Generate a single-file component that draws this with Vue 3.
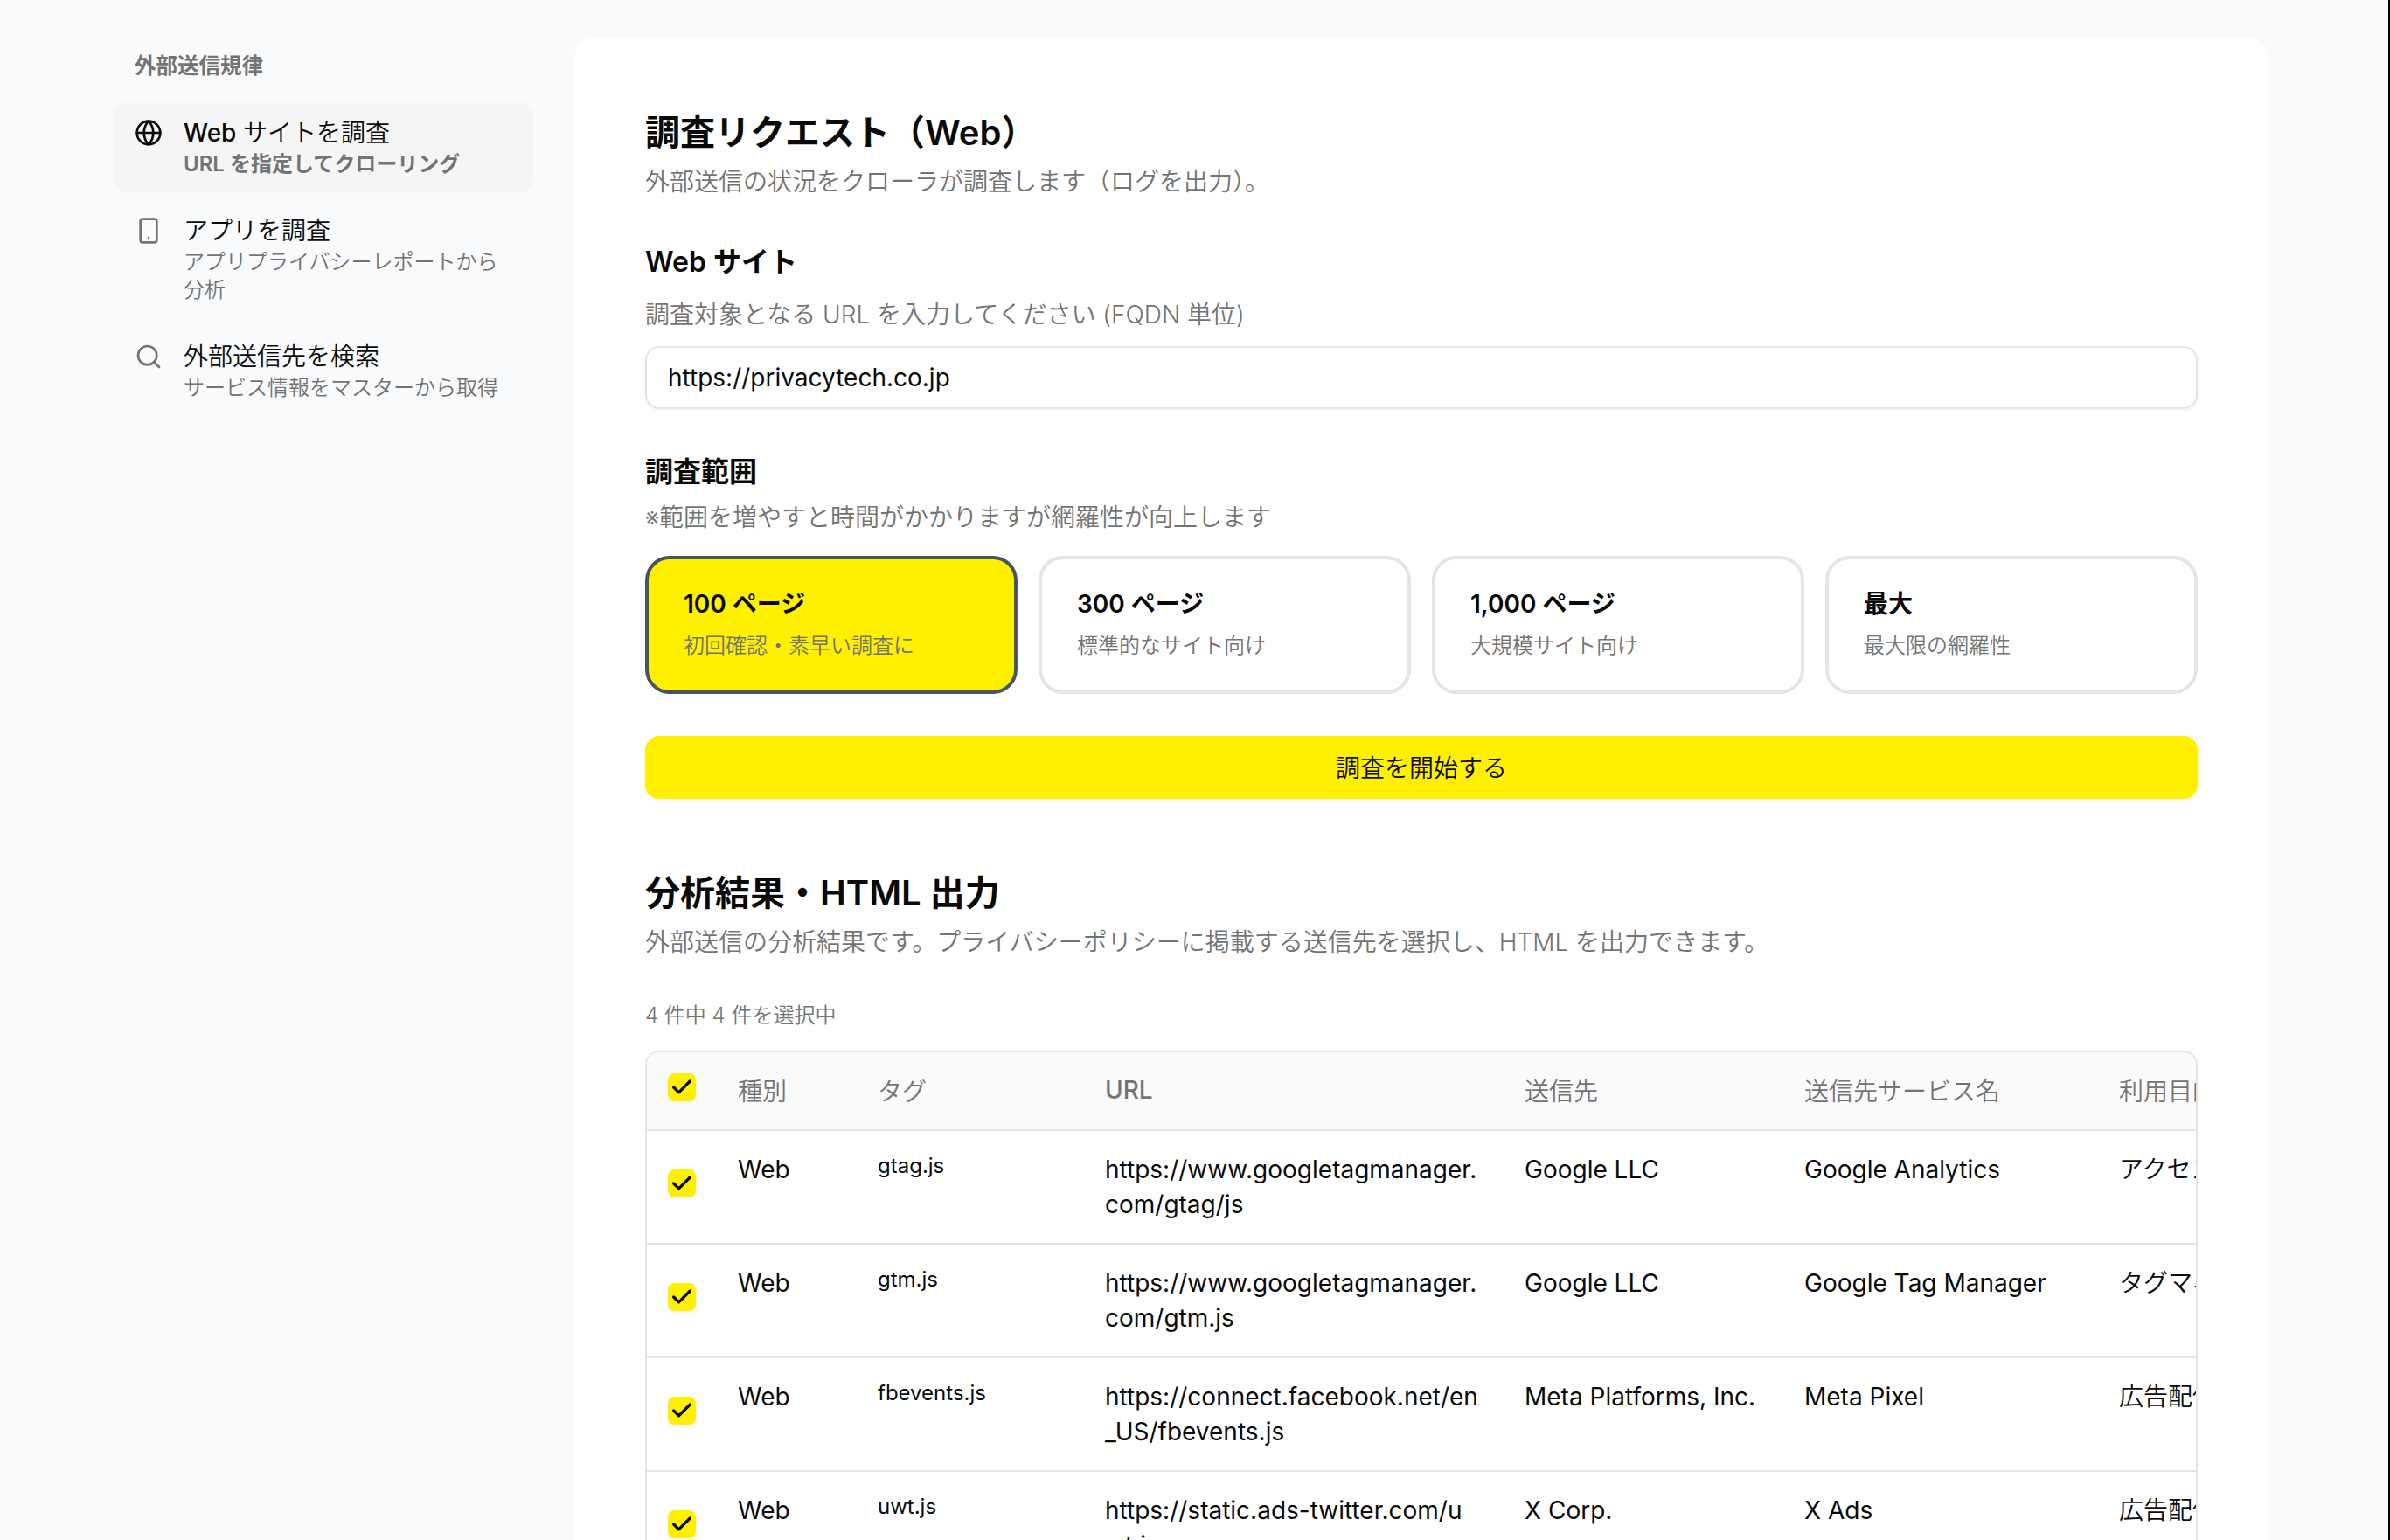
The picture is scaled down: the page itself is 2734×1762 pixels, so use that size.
<template>
  <div class="page">
    <div class="layout">
      <aside class="sidebar">
        <h2 class="side-title">外部送信規律</h2>
        <nav>
          <a v-for="item in menu" :key="item.icon" class="nav-item" :class="{ active: item.active }">
            <svg class="nav-icon" viewBox="0 0 24 24">
              <template v-if="item.icon === 'globe'">
                <circle cx="12" cy="12" r="10" />
                <path d="M12 2a14.5 14.5 0 0 0 0 20 14.5 14.5 0 0 0 0-20" />
                <path d="M2 12h20" />
              </template>
              <template v-else-if="item.icon === 'phone'">
                <rect width="14" height="20" x="5" y="2" rx="2" ry="2" />
                <path d="M12 18h.01" />
              </template>
              <template v-else>
                <circle cx="11" cy="11" r="8" />
                <path d="m21 21-4.3-4.3" />
              </template>
            </svg>
            <span class="nav-text">
              <span class="nav-label"><span v-if="item.prefix" class="latin">{{ item.prefix }}&nbsp;</span>{{ item.label }}</span>
              <span class="nav-desc">{{ item.desc }}</span>
            </span>
          </a>
        </nav>
      </aside>

      <main class="card">
        <h1>調査リクエスト（Web）</h1>
        <p class="lead">外部送信の状況をクローラが調査します（ログを出力）。</p>

        <form @submit.prevent>
          <label class="field-title" for="url">Web サイト</label>
          <p class="hint">調査対象となる URL を入力してください (FQDN 単位)</p>
          <input id="url" v-model="url" class="url-input" type="text" />

          <h3 class="field-title range-title">調査範囲</h3>
          <p class="hint range-hint">※範囲を増やすと時間がかかりますが網羅性が向上します</p>
          <div class="ranges">
            <div
              v-for="range in ranges"
              :key="range.id"
              class="range"
              :class="{ selected: range.id === selectedRange }"
              @click="selectedRange = range.id"
            >
              <div class="range-name">{{ range.name }}</div>
              <div class="range-desc">{{ range.desc }}</div>
            </div>
          </div>
          <button type="submit" class="submit">調査を開始する</button>
        </form>

        <h1 class="result-title">分析結果・HTML 出力</h1>
        <p class="lead">外部送信の分析結果です。プライバシーポリシーに掲載する送信先を選択し、HTML を出力できます。</p>
        <p class="count">{{ rows.length }} 件中 {{ selectedCount }} 件を選択中</p>

        <div class="table-wrap">
          <table>
            <colgroup>
              <col v-for="c in columns" :key="c.key" :class="'col-' + c.key" />
            </colgroup>
            <thead>
              <tr>
                <th v-for="c in columns" :key="c.key" :class="'head-' + c.key">
                  <span v-if="c.key === 'check'" class="checkbox" @click="toggleAll">
                    <svg v-if="selectedCount === rows.length" viewBox="0 0 24 24"><path d="M20 6 9 17l-5-5" /></svg>
                  </span>
                  <template v-else>{{ c.label }}</template>
                </th>
              </tr>
            </thead>
            <tbody>
              <tr v-for="row in rows" :key="row.tag">
                <td class="cell-check">
                  <span class="checkbox" :class="{ off: !row.checked }" @click="row.checked = !row.checked">
                    <svg v-if="row.checked" viewBox="0 0 24 24"><path d="M20 6 9 17l-5-5" /></svg>
                  </span>
                </td>
                <td>{{ row.type }}</td>
                <td class="cell-tag">{{ row.tag }}</td>
                <td class="cell-url">{{ row.url }}</td>
                <td>{{ row.company }}</td>
                <td>{{ row.service }}</td>
                <td class="cell-purpose">{{ row.purpose }}</td>
              </tr>
            </tbody>
          </table>
        </div>
      </main>
    </div>
  </div>
</template>

<script setup>
import { computed, reactive, ref } from 'vue';

const url = ref('https://privacytech.co.jp');
const selectedRange = ref('100');

const menu = [
  { icon: 'globe', prefix: 'Web', label: 'サイトを調査', desc: 'URL を指定してクローリング', active: true },
  { icon: 'phone', label: 'アプリを調査', desc: 'アプリプライバシーレポートから分析' },
  { icon: 'search', label: '外部送信先を検索', desc: 'サービス情報をマスターから取得' }
];

const ranges = [
  { id: '100', name: '100 ページ', desc: '初回確認・素早い調査に' },
  { id: '300', name: '300 ページ', desc: '標準的なサイト向け' },
  { id: '1000', name: '1,000 ページ', desc: '大規模サイト向け' },
  { id: 'max', name: '最大', desc: '最大限の網羅性' }
];

const columns = [
  { key: 'check' },
  { key: 'type', label: '種別' },
  { key: 'tag', label: 'タグ' },
  { key: 'url', label: 'URL' },
  { key: 'company', label: '送信先' },
  { key: 'service', label: '送信先サービス名' },
  { key: 'purpose', label: '利用目的' }
];

const rows = reactive([
  { checked: true, type: 'Web', tag: 'gtag.js', url: 'https://www.googletagmanager.com/gtag/js', company: 'Google LLC', service: 'Google Analytics', purpose: 'アクセス解析' },
  { checked: true, type: 'Web', tag: 'gtm.js', url: 'https://www.googletagmanager.com/gtm.js', company: 'Google LLC', service: 'Google Tag Manager', purpose: 'タグマネジメント' },
  { checked: true, type: 'Web', tag: 'fbevents.js', url: 'https://connect.facebook.net/en_US/fbevents.js', company: 'Meta Platforms, Inc.', service: 'Meta Pixel', purpose: '広告配信' },
  { checked: true, type: 'Web', tag: 'uwt.js', url: 'https://static.ads-twitter.com/uwt.js', company: 'X Corp.', service: 'X Ads', purpose: '広告配信' }
]);

const selectedCount = computed(() => rows.filter(r => r.checked).length);

function toggleAll() {
  const next = selectedCount.value !== rows.length;
  rows.forEach(r => { r.checked = next; });
}
</script>

<style>
body {
  background: #f9fafc;
  overflow: hidden;
}
</style>

<style scoped>
.page {
  box-sizing: border-box;
  height: 1762px;
  overflow: hidden;
  padding: 44px 138px 0 130px;
  border-right: 2px solid #000;
  background: #f9fafc;
  color: #0a0a0a;
  font-family: Inter, "Noto Sans CJK JP", sans-serif;
  font-size: 28px;
}
h1, h2, h3, p {
  margin: 0;
}
.layout {
  display: flex;
  gap: 48px;
}
.sidebar {
  width: 480px;
  flex: none;
}
.side-title {
  padding: 14px 24px 0;
  height: 58px;
  font-size: 24.5px;
  line-height: 34px;
  font-weight: 600;
  color: #737373;
}
nav {
  display: flex;
  flex-direction: column;
  gap: 8px;
}
.nav-item {
  display: flex;
  gap: 24px;
  padding: 20px 24px 16px;
  border-radius: 16px;
}
.nav-item.active {
  background: #f5f5f5;
}
.nav-icon {
  flex: none;
  width: 32px;
  height: 32px;
  fill: none;
  stroke: #737373;
  stroke-width: 2;
  stroke-linecap: round;
  stroke-linejoin: round;
}
.active .nav-icon {
  stroke: #0a0a0a;
}
.nav-text {
  display: flex;
  flex-direction: column;
  gap: 4px;
}
.nav-label {
  font-size: 28px;
  line-height: 32px;
  font-weight: 350;
}
.latin {
  font-weight: 500;
}
.nav-desc {
  font-size: 24px;
  line-height: 32px;
  font-weight: 350;
  color: #737373;
}
.active .nav-desc {
  font-weight: 600;
}
.card {
  box-sizing: border-box;
  width: 1936px;
  height: 1800px;
  padding: 80px;
  border-radius: 20px;
  background: #fff;
}
h1 {
  font-size: 40px;
  line-height: 56px;
  font-weight: 600;
}
.lead {
  font-size: 28px;
  line-height: 56px;
  font-weight: 350;
  color: #737373;
}
.field-title {
  display: block;
  margin-top: 40px;
  font-size: 32px;
  line-height: 48px;
  font-weight: 600;
}
.hint {
  margin-top: 14px;
  font-size: 28px;
  line-height: 44px;
  font-weight: 350;
  color: #737373;
}
.url-input {
  box-sizing: border-box;
  display: block;
  width: 100%;
  height: 72px;
  margin-top: 14px;
  padding: 0 24px;
  border: 2px solid #e5e5e5;
  border-radius: 16px;
  box-shadow: 0 2px 4px #0000000d;
  font: inherit;
  color: inherit;
  outline: none;
}
.range-title {
  margin-top: 48px;
}
.range-hint {
  margin-top: 6px;
}
.ranges {
  display: grid;
  grid-template-columns: repeat(4, 1fr);
  gap: 24px;
  margin-top: 22px;
}
.range {
  box-sizing: border-box;
  height: 158px;
  padding: 31px 40px;
  border: 4px solid #e5e5e5;
  border-radius: 28px;
}
.range.selected {
  background: #fff000;
  border-color: #475569;
}
.range-name {
  font-size: 28px;
  line-height: 40px;
  font-weight: 600;
}
.range-desc {
  margin-top: 10px;
  font-size: 24px;
  line-height: 36px;
  font-weight: 350;
  color: #737373;
}
.submit {
  display: block;
  width: 100%;
  height: 72px;
  margin-top: 48px;
  padding: 0 0 2px;
  border: 0;
  border-radius: 16px;
  background: #fff000;
  box-shadow: 0 2px 4px #0000000d;
  font: inherit;
  font-weight: 350;
  color: inherit;
}
.result-title {
  margin-top: 80px;
}
.count {
  margin-top: 38px;
  font-size: 24px;
  line-height: 36px;
  font-weight: 350;
  color: #737373;
}
.table-wrap {
  margin-top: 22px;
  height: 700px;
  overflow: hidden;
  border: 2px solid #e5e5e5;
  border-radius: 16px;
}
table {
  width: 2100px;
  table-layout: fixed;
  border-collapse: separate;
  border-spacing: 0;
}
.col-check { width: 80px; }
.col-type { width: 160px; }
.col-tag { width: 260px; }
.col-url { width: 480px; }
.col-company { width: 320px; }
.col-service { width: 360px; }
th {
  box-sizing: border-box;
  height: 90px;
  padding: 0 24px 2px;
  border-bottom: 2px solid #e5e5e5;
  background: #fafafa;
  text-align: left;
  font-weight: 350;
  color: #737373;
}
.head-check {
  padding-bottom: 8px;
}
.head-url {
  font-weight: 500;
}
td {
  box-sizing: border-box;
  height: 130px;
  padding: 24px 24px 22px;
  border-bottom: 2px solid #e5e5e5;
  vertical-align: top;
  line-height: 40px;
}
.cell-check {
  padding-bottom: 32px;
  vertical-align: middle;
}
.cell-tag {
  font-size: 24px;
  line-height: 32px;
}
.cell-url {
  padding-right: 27px;
  word-break: break-all;
}
.cell-purpose {
  font-weight: 350;
}
.checkbox {
  display: flex;
  align-items: center;
  justify-content: center;
  width: 32px;
  height: 32px;
  border-radius: 8px;
  background: #fff000;
  box-shadow: 0 2px 4px #0000000d;
}
.checkbox.off {
  background: #fff;
}
.checkbox svg {
  width: 28px;
  height: 28px;
  fill: none;
  stroke: #0a0a0a;
  stroke-width: 2.8;
  stroke-linecap: round;
  stroke-linejoin: round;
}
</style>
